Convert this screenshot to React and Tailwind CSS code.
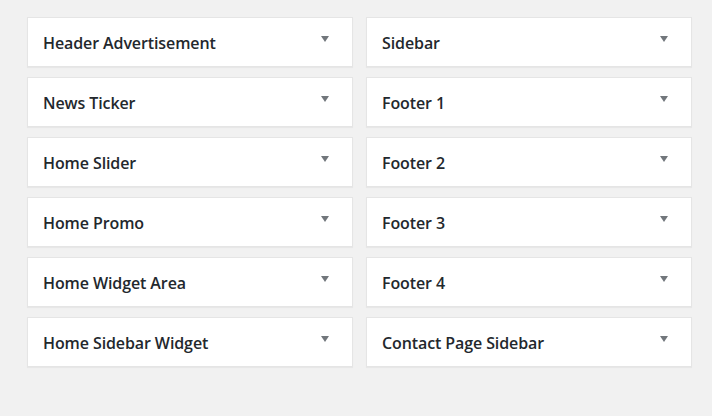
import React from 'react';

const left = ['Header Advertisement', 'News Ticker', 'Home Slider', 'Home Promo', 'Home Widget Area', 'Home Sidebar Widget'];
const right = ['Sidebar', 'Footer 1', 'Footer 2', 'Footer 3', 'Footer 4', 'Contact Page Sidebar'];

const Widget = ({ title }) => (
    <div className="h-[50px] bg-white border border-[#e5e5e5] shadow-[0_1px_1px_rgba(0,0,0,0.04)] flex items-center justify-between pl-[15px] pr-[23px]">
        <h3 className="text-[16px] font-semibold text-[#23282d] font-['Open_Sans',sans-serif] mt-px tracking-[-0.1px]">{title}</h3>
        <span className="w-0 h-0 border-l-[4px] border-r-[4px] border-t-[6px] border-l-transparent border-r-transparent border-t-[#72777c] mb-[7px]" />
    </div>
);

export default function App() {
    return (
        <div className="w-[712px] h-[416px] bg-[#f1f1f1] pt-[17px] pl-[27px] flex gap-[13px]">
            {[left, right].map((col, i) => (
                <div key={i} className="w-[326px] flex flex-col gap-[10px]">
                    {col.map(t => <Widget key={t} title={t} />)}
                </div>
            ))}
        </div>
    );
}
